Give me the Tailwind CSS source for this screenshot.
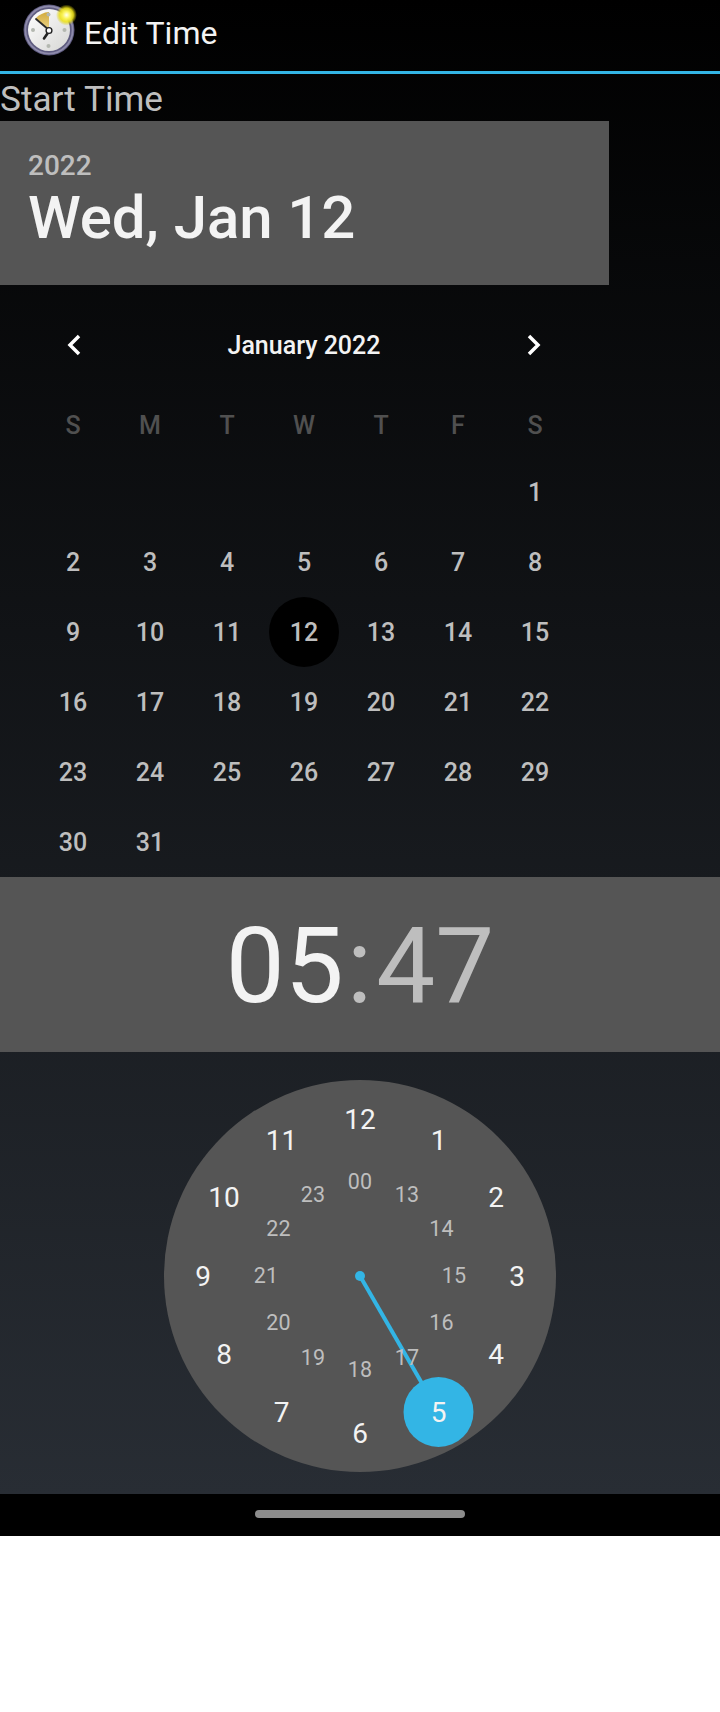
<!DOCTYPE html>
<html lang="en">
<head>
<meta charset="utf-8">
<title>Edit Time</title>
<script src="https://cdn.jsdelivr.net/npm/@tailwindcss/browser@4"></script>
</head>
<body class="bg-white font-['Roboto',sans-serif]">
<div class="flex h-[1494px] w-[720px] flex-col bg-linear-to-b/srgb from-black to-[#282d34]">
  <header class="flex h-[74px] shrink-0 border-b-3 border-[#33b5e5] pl-[22px]">
    <svg class="mt-[3px] h-[54px] w-[56px] shrink-0" viewBox="22 3 56 54">
      <defs>
        <radialGradient id="sun"><stop offset="0" stop-color="#fffff0"/><stop offset=".35" stop-color="#fbf45c"/><stop offset=".65" stop-color="#ede21c" stop-opacity=".9"/><stop offset="1" stop-color="#d5c900" stop-opacity="0"/></radialGradient>
        <linearGradient id="face" x1="0" y1="0" x2="1" y2="1"><stop offset="0" stop-color="#fff"/><stop offset="1" stop-color="#d6d6d4"/></linearGradient>
        <linearGradient id="wedge" x1="0" y1="0" x2="0" y2="1"><stop offset="0" stop-color="#d2aa3a"/><stop offset="1" stop-color="#ecd68c"/></linearGradient>
      </defs>
      <circle cx="49" cy="30" r="25.500" fill="#5f5c80"/>
      <circle cx="49" cy="30" r="23.600" fill="none" stroke="#8e8bab" stroke-width="1.800"/>
      <circle cx="49" cy="30" r="21" fill="url(#face)"/>
      <path d="M49 30L35.500 18.500Q41 12.500 49 12Z" fill="url(#wedge)"/>
      <g fill="#b4b8b0"><circle cx="48.500" cy="14.500" r="2"/><circle cx="33" cy="30" r="2"/><circle cx="64.500" cy="30" r="2"/><circle cx="48.500" cy="46" r="2"/></g>
      <path d="M49 30L36 19" stroke="#2a2a2a" stroke-width="1.800" stroke-linecap="round"/>
      <path d="M48.500 32L44 38.500" stroke="#222" stroke-width="2.600" stroke-linecap="round"/>
      <circle cx="49" cy="30.500" r="2.900" fill="#fff" stroke="#222" stroke-width="1.400"/>
      <circle cx="66.500" cy="15" r="10.500" fill="url(#sun)"/>
    </svg>
    <h1 class="ml-[6px] mt-[13px] text-[32px] leading-[40px] text-[#f3f3f3]">Edit Time</h1>
  </header>
  <div class="h-[47px] shrink-0 pt-[2px] text-[35.2px] leading-[46px] text-[#bebebe]">Start Time</div>

  <section class="h-[164px] w-[609px] shrink-0 bg-[#555] pl-[28px] pt-[28px] font-medium">
    <div class="text-[28px] leading-[34px] text-[#bebebe]">2022</div>
    <div class="text-[60px] leading-[70px] tracking-[-0.1px] text-[#f3f3f3]">Wed, Jan 12</div>
  </section>

  <section class="h-[592px] w-[608px] shrink-0 px-[34.500px] text-[25px] font-medium text-[#bebebe]">
    <div class="flex h-[121px] items-center justify-between px-[31px] text-[#f3f3f3]">
      <svg class="-mt-px h-6 w-[16px]" viewBox="0 0 16 24"><path d="M13 3L4 12L13 21" fill="none" stroke="#fff" stroke-width="3.500"/></svg>
      <div>January 2022</div>
      <svg class="-mt-px h-6 w-[16px]" viewBox="0 0 16 24"><path d="M3 3L12 12L3 21" fill="none" stroke="#fff" stroke-width="3.500"/></svg>
    </div>
    <div class="grid h-[52px] grid-cols-7 text-center leading-[40px] text-[#505050]">
      <div>S</div><div>M</div><div>T</div><div>W</div><div>T</div><div>F</div><div>S</div>
    </div>
    <div class="-mt-px grid auto-rows-[70px] grid-cols-7 place-items-center leading-[68px] *:pt-[2px]">
      <div class="col-start-7">1</div>
      <div>2</div><div>3</div><div>4</div><div>5</div><div>6</div><div>7</div><div>8</div>
      <div>9</div><div>10</div><div>11</div><div class="size-[70px] rounded-full bg-black text-center">12</div><div>13</div><div>14</div><div>15</div>
      <div>16</div><div>17</div><div>18</div><div>19</div><div>20</div><div>21</div><div>22</div>
      <div>23</div><div>24</div><div>25</div><div>26</div><div>27</div><div>28</div><div>29</div>
      <div>30</div><div>31</div>
    </div>
  </section>

  <section class="flex h-[175px] shrink-0 items-center justify-center bg-[#555] pt-[3px] text-[105px] leading-[123px] text-[#bebebe]"><span class="text-[#f3f3f3]">05</span><span class="ml-[3px] mr-1">:</span><span>47</span></section>

  <svg class="mt-7 h-[392px] w-[392px] shrink-0 self-center" viewBox="-196 -196 392 392">
    <circle r="196" fill="#555"/>
    <path d="M0 0L78.500 136" stroke="#33b5e5" stroke-width="4"/>
    <circle r="5" fill="#33b5e5"/>
    <circle cx="78.500" cy="136" r="35" fill="#33b5e5"/>
    <g font-size="28" fill="#f3f3f3" text-anchor="middle">
      <text x="0" y="-147">12</text><text x="78.500" y="-126">1</text><text x="136" y="-69">2</text><text x="157" y="10">3</text><text x="136" y="88">4</text><text x="78.500" y="146">5</text><text x="0" y="167">6</text><text x="-78.500" y="146">7</text><text x="-136" y="88">8</text><text x="-157" y="10">9</text><text x="-136" y="-69">10</text><text x="-78.500" y="-126">11</text>
    </g>
    <g font-size="21.500" letter-spacing=".1" fill="#bebebe" text-anchor="middle">
      <text x="0" y="-87">00</text><text x="47" y="-74">13</text><text x="81.500" y="-40">14</text><text x="94" y="7">15</text><text x="81.500" y="54">16</text><text x="47" y="89">17</text><text x="0" y="101">18</text><text x="-47" y="89">19</text><text x="-81.500" y="54">20</text><text x="-94" y="7">21</text><text x="-81.500" y="-40">22</text><text x="-47" y="-74">23</text>
    </g>
  </svg>
</div>
<div class="flex h-[42px] w-[720px] justify-center bg-black pt-4">
  <div class="h-2 w-[210px] rounded-full bg-[#8c8c8c]"></div>
</div>
</body>
</html>
